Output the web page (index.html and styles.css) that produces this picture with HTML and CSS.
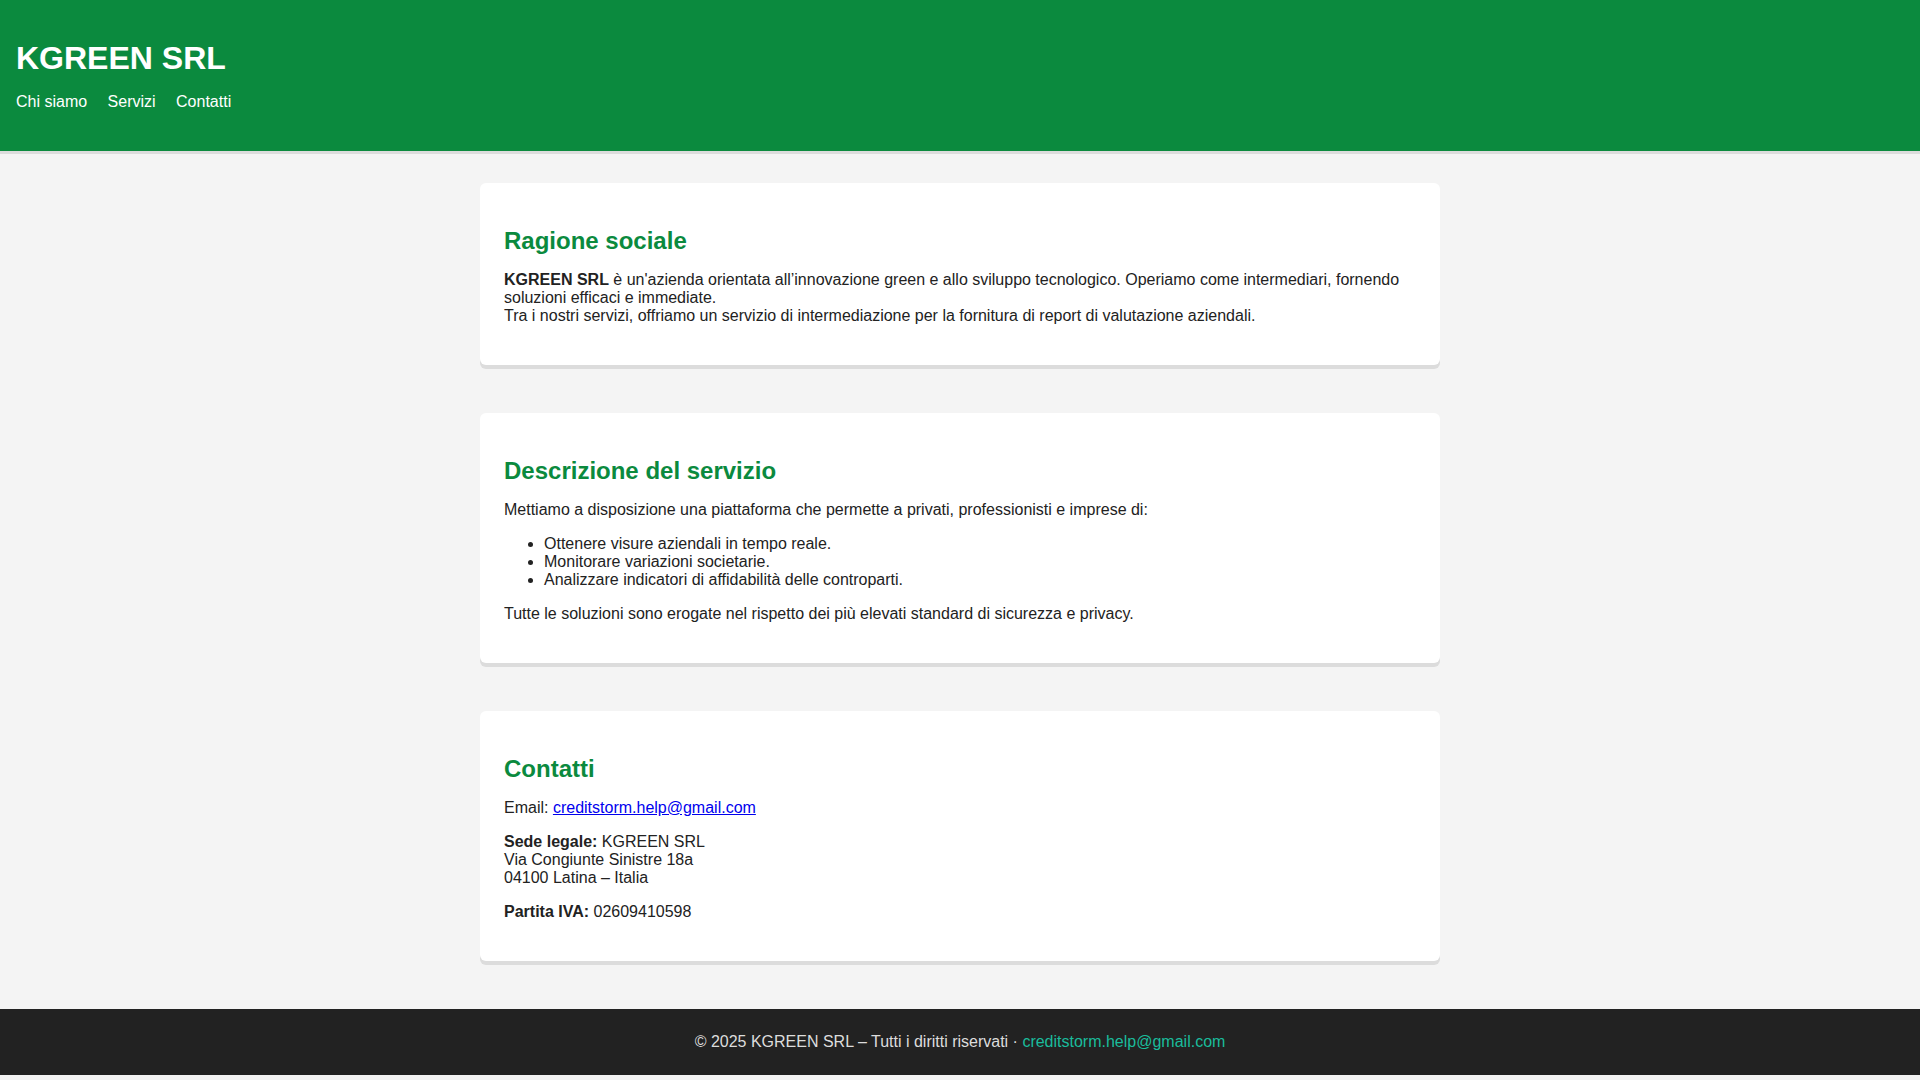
FILE: index.html
```html
<!DOCTYPE html>
<html lang="it">
<head>
<meta charset="utf-8">
<title>KGREEN SRL</title>
<link rel="stylesheet" href="styles.css">
</head>
<body>
<header class="site-header">
  <h1 class="brand">KGREEN SRL</h1>
  <nav class="nav">
    <a href="#chi-siamo">Chi siamo</a>
    <a href="#servizi">Servizi</a>
    <a href="#contatti">Contatti</a>
  </nav>
</header>
<main class="main">
  <section class="card" id="chi-siamo">
    <h2>Ragione sociale</h2>
    <p><strong>KGREEN SRL</strong> è un'azienda orientata all’innovazione green e allo sviluppo tecnologico. Operiamo come intermediari, fornendo soluzioni efficaci e immediate.<br>Tra i nostri servizi, offriamo un servizio di intermediazione per la fornitura di report di valutazione aziendali.</p>
  </section>
  <section class="card" id="servizi">
    <h2>Descrizione del servizio</h2>
    <p>Mettiamo a disposizione una piattaforma che permette a privati, professionisti e imprese di:</p>
    <ul>
      <li>Ottenere visure aziendali in tempo reale.</li>
      <li>Monitorare variazioni societarie.</li>
      <li>Analizzare indicatori di affidabilità delle controparti.</li>
    </ul>
    <p>Tutte le soluzioni sono erogate nel rispetto dei più elevati standard di sicurezza e privacy.</p>
  </section>
  <section class="card" id="contatti">
    <h2>Contatti</h2>
    <p>Email: <a href="mailto:creditstorm.help@gmail.com">creditstorm.help@gmail.com</a></p>
    <p><strong>Sede legale:</strong> KGREEN SRL<br>Via Congiunte Sinistre 18a<br>04100 Latina – Italia</p>
    <p><strong>Partita IVA:</strong> 02609410598</p>
  </section>
</main>
<footer class="site-footer">
  <p>© 2025 KGREEN SRL – Tutti i diritti riservati · <a href="mailto:creditstorm.help@gmail.com">creditstorm.help@gmail.com</a></p>
</footer>
</body>
</html>
```
FILE: styles.css
```css
html, body {
  margin: 0;
  padding: 0;
}
body {
  background: #f4f4f4;
  color: #222;
  font-family: "Liberation Sans", Arial, sans-serif;
  font-size: 16px;
}
.site-header {
  background: #0b8a3e;
  color: #fff;
  padding: 40px 16px 40px;
  box-shadow: 0 3px 0 #dcdcdc;
}
.brand {
  margin: 0 0 16px;
  font-size: 32px;
  font-weight: bold;
}
.nav a {
  color: #fff;
  text-decoration: none;
  margin-right: 16px;
}
.main {
  padding: 32px 0 48px;
  display: flex;
  flex-direction: column;
  align-items: center;
  gap: 48px;
}
.card {
  width: 912px;
  background: #fff;
  padding: 24px;
  border-radius: 6px;
  box-shadow: 0 4px 0 #dcdcdc;
}
.card h2 {
  color: #0b8a3e;
  font-size: 24px;
  margin: 20px 0 16px;
}
.card p {
  margin: 16px 0;
}
.card ul {
  margin: 16px 0;
  padding-left: 40px;
}
.card a {
  color: #0000ee;
}
.site-footer {
  background: #222;
  color: #ddd;
  text-align: center;
  padding: 24px 0;
}
.site-footer p {
  margin: 0;
}
.site-footer a {
  color: #1abc9c;
  text-decoration: none;
}
```
